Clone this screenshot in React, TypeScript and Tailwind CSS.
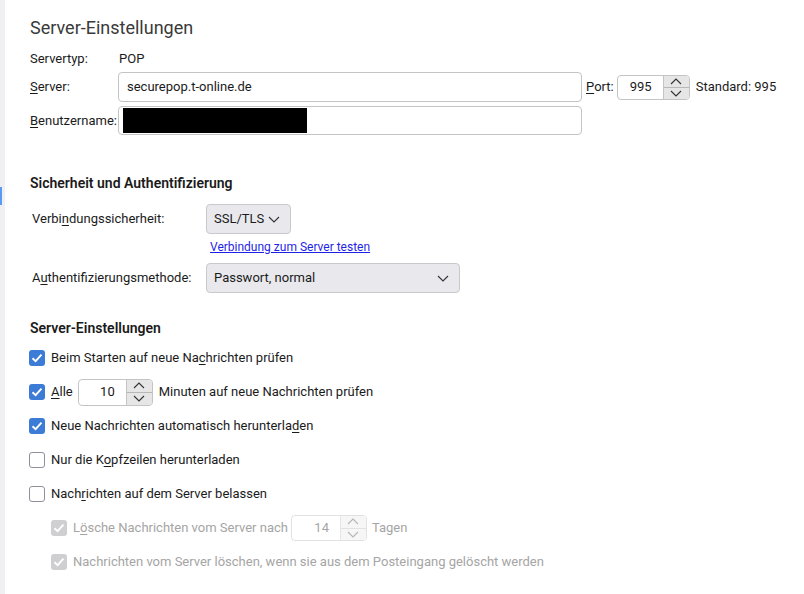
import React from "react";

const FONT = { fontFamily: 'Roboto, "Noto Sans", sans-serif' };

function Chevron({ dir, className = "" }: { dir: "up" | "down"; className?: string }) {
  return (
    <svg width="12" height="7" viewBox="0 0 12 7" className={className}>
      <path
        d={dir === "up" ? "M1 6 L6 1 L11 6" : "M1 1 L6 6 L11 1"}
        fill="none"
        stroke="currentColor"
        strokeWidth="1.1"
      />
    </svg>
  );
}

function Spin({
  value,
  w,
  h,
  disabled = false,
}: {
  value: string;
  w: string;
  h: string;
  disabled?: boolean;
}) {
  return (
    <div
      className={`flex ${w} ${h} rounded-[4px] border ${
        disabled ? "border-[#e2e2e2]" : "border-[#c4c4c4]"
      } bg-white overflow-hidden shrink-0`}
    >
      <div
        className={`flex-1 flex items-center justify-end pr-[11px] ${
          disabled ? "text-[#a5a5a5]" : "text-[#1b1b1b]"
        }`}
      >
        {value}
      </div>
      <div
        className={`w-[26px] flex flex-col border-l ${
          disabled ? "border-[#e6e6e6] bg-[#f6f6f6] text-[#b5b5b5]" : "border-[#c4c4c4] bg-[#e6e6e6] text-[#333]"
        }`}
      >
        <div className="flex-1 flex items-center justify-center">
          <Chevron dir="up" />
        </div>
        <div className={`h-px ${disabled ? "bg-[#e2e2e2]" : "bg-[#b8b8b8]"}`} />
        <div className="flex-1 flex items-center justify-center">
          <Chevron dir="down" />
        </div>
      </div>
    </div>
  );
}

function Check({ checked, disabled = false }: { checked: boolean; disabled?: boolean }) {
  if (!checked) {
    return (
      <div className="w-[16px] h-[16px] rounded-[3px] border border-[#8f8f9d] bg-white shrink-0" />
    );
  }
  return (
    <div
      className={`w-[16px] h-[16px] rounded-[3px] flex items-center justify-center shrink-0 ${
        disabled ? "bg-[#cfcfd2]" : "bg-[#3c7bd6]"
      }`}
    >
      <svg width="14" height="14" viewBox="0 0 14 14">
        <path d="M2.5 7.2 L5.6 10.2 L11.5 3.6" fill="none" stroke="white" strokeWidth="1.9" />
      </svg>
    </div>
  );
}

function U({ children }: { children: React.ReactNode }) {
  return <span className="underline underline-offset-2">{children}</span>;
}

function Select({ label, w }: { label: string; w: string }) {
  return (
    <div
      className={`${w} h-[30px] rounded-[4px] border border-[#c9c9cd] bg-[#e9e9ed] flex items-center justify-between pl-[7px] pr-[10px] text-[#1b1b1b]`}
    >
      <span>{label}</span>
      <Chevron dir="down" className="text-[#333]" />
    </div>
  );
}

export default function App() {
  return (
    <div
      className="w-[804px] h-[594px] bg-white flex overflow-hidden text-[13px] text-[#1b1b1b]"
      style={FONT}
    >
      <div className="w-[5px] bg-[#f0f0f4] relative shrink-0">
        <div className="absolute left-0 top-[187px] w-[2px] h-[18px] bg-[#5a9af0]" />
      </div>
      <div className="flex-1 pl-[25px] flex flex-col">
        <div className="mt-[14px] h-[28px] leading-[28px] text-[18px] text-[#3a3a3a]">
          Server-Einstellungen
        </div>

        <div className="mt-[7px] h-[20px] flex items-center">
          <span className="w-[89px]">Servertyp:</span>
          <span>POP</span>
        </div>

        <div className="mt-[3px] flex items-center">
          <span className="w-[88px]">
            <U>S</U>erver:
          </span>
          <div className="w-[464px] h-[30px] rounded-[4px] border border-[#c4c4c4] flex items-center px-[8px]">
            securepop.t-online.de
          </div>
          <span className="ml-[4px] mr-[3px]">
            <U>P</U>ort:
          </span>
          <Spin value="995" w="w-[73px]" h="h-[25px]" />
          <span className="ml-[6px]">Standard: 995</span>
        </div>

        <div className="mt-[4px] flex items-center">
          <span className="w-[88px]">
            <U>B</U>enutzername:
          </span>
          <div className="w-[464px] h-[29px] rounded-[4px] border border-[#c4c4c4] flex items-center px-[4px]">
            <div className="w-[184px] h-[25px] bg-black" />
          </div>
        </div>

        <div className="mt-[38px] h-[20px] leading-[20px] text-[14px] font-semibold">
          Sicherheit und Authentifizierung
        </div>

        <div className="mt-[11px] pl-[2px] flex items-center">
          <span className="w-[174px]">
            Verbi<U>n</U>dungssicherheit:
          </span>
          <Select label="SSL/TLS" w="w-[85px]" />
        </div>

        <div className="mt-[5px] pl-[180px] h-[16px] leading-[16px] text-[12px]">
          <a href="#" className="text-[#1f1fe6] underline">
            Verbindung zum Server testen
          </a>
        </div>

        <div className="mt-[8px] pl-[2px] flex items-center">
          <span className="w-[174px]">
            A<U>u</U>thentifizierungsmethode:
          </span>
          <Select label="Passwort, normal" w="w-[254px]" />
        </div>

        <div className="mt-[25px] h-[20px] leading-[20px] text-[14px] font-semibold">
          Server-Einstellungen
        </div>

        <div className="mt-[7px] flex flex-col gap-[8px] -ml-[1px]">
          <div className="h-[26px] flex items-center gap-[6px]">
            <Check checked />
            <span>
              Beim Starten auf neue Na<U>c</U>hrichten prüfen
            </span>
          </div>
          <div className="h-[26px] flex items-center gap-[6px]">
            <Check checked />
            <span>
              <U>A</U>lle
            </span>
            <div className="-ml-[1px]">
              <Spin value="10" w="w-[75px]" h="h-[27px]" />
            </div>
            <span>Minuten auf neue Nachrichten prüfen</span>
          </div>
          <div className="h-[26px] flex items-center gap-[6px]">
            <Check checked />
            <span>
              Neue Nachrichten automatisch herunterla<U>d</U>en
            </span>
          </div>
          <div className="h-[26px] flex items-center gap-[6px]">
            <Check checked={false} />
            <span>
              Nur die K<U>o</U>pfzeilen herunterladen
            </span>
          </div>
          <div className="h-[26px] flex items-center gap-[6px]">
            <Check checked={false} />
            <span>
              Nach<U>r</U>ichten auf dem Server belassen
            </span>
          </div>
          <div className="h-[26px] pl-[22px] flex items-center gap-[6px] text-[#a5a5a5]">
            <Check checked disabled />
            <span>
              L<U>ö</U>sche Nachrichten vom Server nach
            </span>
            <div className="-ml-[3px]">
              <Spin value="14" w="w-[76px]" h="h-[26px]" disabled />
            </div>
            <span className="-ml-[1px]">Tagen</span>
          </div>
          <div className="h-[26px] pl-[22px] flex items-center gap-[6px] text-[#a5a5a5]">
            <Check checked disabled />
            <span>Nachrichten vom Server löschen, wenn sie aus dem Posteingang gelöscht werden</span>
          </div>
        </div>
      </div>
    </div>
  );
}
